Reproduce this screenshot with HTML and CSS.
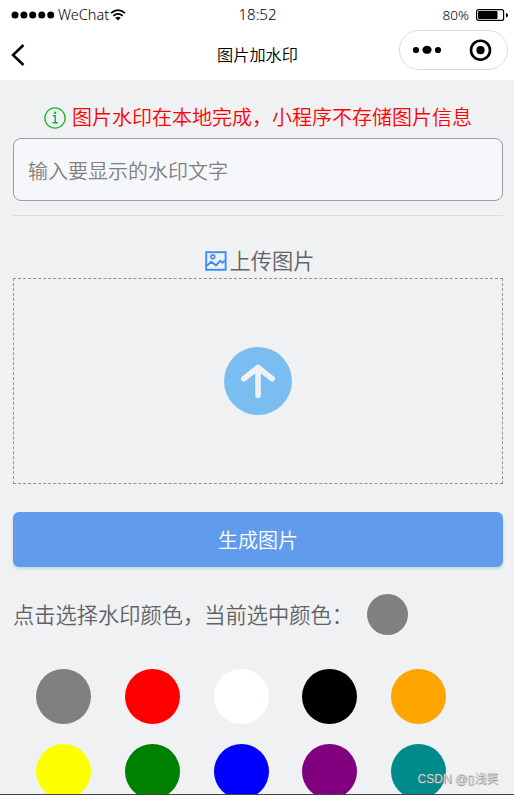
FILE: index.html
```html
<!DOCTYPE html>
<html lang="zh-CN">
<head>
<meta charset="utf-8">
<title>图片加水印</title>
<link rel="stylesheet" href="styles.css">
</head>
<body>
<div class="app">
  <header class="top">
    <div class="status">
      <div class="carrier">
        <svg class="signal" width="44" height="8" viewBox="0 0 44 8"><circle cx="4" cy="4" r="3.5"/><circle cx="12.9" cy="4" r="3.5"/><circle cx="21.7" cy="4" r="3.5"/><circle cx="30.8" cy="4" r="3.5"/><circle cx="39.7" cy="4" r="3.5"/></svg>
        <span class="carrier-name">WeChat</span>
        <svg class="wifi" width="16" height="12" viewBox="0 0 16 12" fill="none" stroke="#000" stroke-width="1.7"><path d="M1 4.2Q8 -2 15 4.2M3.3 6.8Q8 2.8 12.7 6.8"/><path d="M5.2 8.8Q8 6.6 10.8 8.8L8 11.6Z" fill="#000" stroke="none"/></svg>
      </div>
      <div class="time">18:52</div>
      <div class="power">
        <span>80%</span>
        <svg width="32" height="12" viewBox="0 0 32 12"><rect x=".6" y=".6" width="27" height="10.8" rx="2" fill="none" stroke="#000" stroke-width="1.2"/><rect x="2" y="2" width="19.5" height="8" rx="1"/><path d="M30 4Q32 4.2 32 6.2T30 8.4Z"/></svg>
      </div>
    </div>
    <div class="nav">
      <svg class="back" width="14" height="22" viewBox="0 0 14 22" fill="none" stroke="#000" stroke-width="2.5"><path d="M12.5 1L2 11L12.5 21"/></svg>
      <h1 class="title">图片加水印</h1>
      <div class="capsule">
        <svg width="109" height="40" viewBox="0 0 109 40"><circle cx="17" cy="20" r="3.1"/><ellipse cx="28" cy="19.8" rx="4.6" ry="4"/><circle cx="39" cy="20" r="3.1"/><circle cx="81.5" cy="20.2" r="9.5" fill="none" stroke="#000" stroke-width="2.6"/><circle cx="81.5" cy="20.2" r="4.1"/></svg>
      </div>
    </div>
  </header>
  <main class="content">
    <div class="notice">
      <svg width="22" height="22" viewBox="0 0 22 22" fill="none" stroke="#1cb52b"><circle cx="11" cy="11" r="10.1" stroke-width="1.3"/><path d="M8.8 8.8H11.3V15.5M8.6 15.8H14" stroke="#1bae5c" stroke-width="1.5"/><circle cx="11" cy="5.8" r="1.3" fill="#1bae5c" stroke="none"/></svg>
      <span>图片水印在本地完成，小程序不存储图片信息</span>
    </div>
    <div class="field">输入要显示的水印文字</div>
    <div class="divider"></div>
    <div class="upload-title">
      <svg width="22" height="20" viewBox="0 0 22 20" fill="none" stroke="#3b8cff" stroke-width="1.9"><rect x="1.2" y="1.2" width="19.4" height="17.6"/><circle cx="7.8" cy="5.8" r="1.9" stroke-width="1.6"/><path d="M2 14.6L6.2 10.8L11 14.4L15.2 9.8L17.3 11.8L20 9.6"/></svg>
      <span>上传图片</span>
    </div>
    <div class="dropzone">
      <svg width="68" height="68" viewBox="0 0 68 68"><circle cx="34" cy="34" r="34" fill="#7abef1"/><path d="M34 48.5V21M19.8 31.8L34 20.5L48.2 31.8" fill="none" stroke="#eff1f3" stroke-width="5.6" stroke-linecap="round" stroke-linejoin="round"/></svg>
    </div>
    <div class="generate">生成图片</div>
    <div class="current">
      <span class="current-label">点击选择水印颜色，当前选中颜色<span class="colon">：</span></span>
      <i class="current-color gray"></i>
    </div>
    <div class="palette">
      <i class="swatch gray"></i><i class="swatch red"></i><i class="swatch white"></i><i class="swatch black"></i><i class="swatch orange"></i>
      <i class="swatch yellow"></i><i class="swatch green"></i><i class="swatch blue"></i><i class="swatch purple"></i><i class="swatch teal"></i>
    </div>
  </main>
  <div class="credit">CSDN @▯浅笑</div>
</div>
</body>
</html>
```
FILE: styles.css
```css
* { box-sizing: border-box; }
html, body { margin: 0; height: 795px; overflow: hidden; }
body { font-family: "Noto Sans", "Noto Sans CJK SC", sans-serif; font-weight: 350; color: #606266; }
svg { display: block; flex: none; }
.app { position: relative; height: 795px; overflow: hidden; background: #eff1f3; border-bottom: 1px solid #444; }
.top { height: 80px; background: #fff; color: #000; }
.status { height: 29px; padding: 0 6px 0 11px; display: grid; grid-template-columns: 1fr auto 1fr; align-items: center; line-height: 28px; font-weight: 300; }
.carrier { display: flex; align-items: center; font-size: 14.5px; }
.carrier-name { margin: -2px 0 0 3px; width: 52px; white-space: nowrap; }
.time { margin: -1px 0 0 -4px; font-size: 15px; }
.power { display: flex; align-items: center; justify-content: flex-end; gap: 7px; font-size: 13.5px; }
.nav { height: 51px; padding: 0 6px 0 11px; display: grid; grid-template-columns: 1fr auto 1fr; align-items: center; }
.title { margin: 0 0 0 -4px; font-size: 16.2px; line-height: 24px; font-weight: 350; }
.capsule { justify-self: end; width: 109px; height: 40px; margin-top: -10px; border: 1px solid #ddd; border-radius: 20px; }
.capsule svg { margin: -1px; }
.content { padding: 22px 11px 0 13px; }
.notice { height: 36px; padding-bottom: 5px; display: flex; align-items: center; justify-content: center; gap: 6px; font-size: 20px; line-height: 30px; color: #f00; }
.notice svg { margin-top: 1px; }
.field { height: 63px; padding: 1px 14px 0; border: 1px solid #9b9da1; border-radius: 8px; background: #f5f7fb; font-size: 20px; line-height: 63px; color: #808080; }
.divider { height: 1px; margin-top: 14px; background: #d9dbdd; }
.upload-title { height: 32px; margin-top: 30px; padding: 0 0 2px 4px; display: flex; align-items: center; justify-content: center; gap: 2px; font-size: 21.25px; line-height: 32px; }
.dropzone { height: 206px; border: 1px dashed #909294; display: flex; align-items: center; justify-content: center; }
.generate { height: 55px; margin-top: 28px; padding-top: 1px; border-radius: 6px; background: #609ceb; box-shadow: 0 2px 3px rgba(70, 145, 150, .25); color: #fff; font-size: 20px; line-height: 55px; text-align: center; }
.current { height: 41px; margin-top: 27px; display: flex; align-items: center; gap: 14px; font-size: 21.25px; line-height: 43px; }
.current-label { width: 340px; white-space: nowrap; }
.colon { display: inline-block; }
.current-color { width: 41px; height: 41px; border-radius: 50%; }
.palette { margin: 34px 0 0 23px; display: grid; grid-template-columns: repeat(5, 55px); column-gap: 33.75px; row-gap: 20px; }
.swatch { width: 55px; height: 55px; border-radius: 50%; }
.gray { background: gray; }
.red { background: red; }
.white { background: white; }
.black { background: black; }
.orange { background: orange; }
.yellow { background: yellow; }
.green { background: green; }
.blue { background: blue; }
.purple { background: purple; }
.teal { background: #008b8b; }
.credit { position: absolute; right: 16px; bottom: 5px; font-family: "Liberation Sans", "Noto Sans CJK SC", sans-serif; font-size: 12px; line-height: 20px; color: #d4d6d8; text-shadow: 1px 1px 1px #777; white-space: nowrap; }
```
